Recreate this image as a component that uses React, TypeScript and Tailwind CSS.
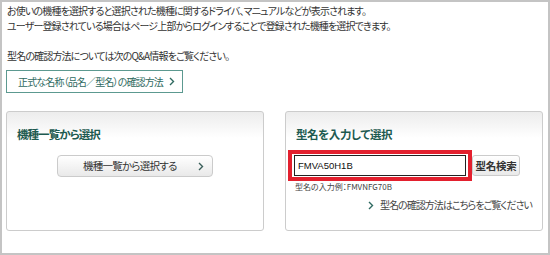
import React from 'react'

const jp = '[font-family:"Noto_Sans_CJK_JP",sans-serif] [font-feature-settings:"palt"]'

const Chevron = ({ className = '' }: { className?: string }) => (
  <svg width="6" height="9" viewBox="0 0 6 9" className={className}>
    <polyline points="1,1 4.5,4.5 1,8" fill="none" stroke="currentColor" strokeWidth="1.4" />
  </svg>
)

const panelBg = 'bg-[linear-gradient(to_bottom,#ececec,#ffffff_26px)]'
const btnBg = 'bg-[linear-gradient(to_bottom,#ffffff,#e9e9e9)]'

const App = () => {
  return (
    <div className={`w-[550px] h-[255px] border-2 border-[#c4c4c4] bg-white text-[#333] ${jp}`}>
      <div className="pl-[5px] pt-px text-[10px] leading-[15px] tracking-[-0.85px]">
        <p>お使いの機種を選択すると選択された機種に関するドライバ、マニュアルなどが表示されます。</p>
        <p>ユーザー登録されている場合はページ上部からログインすることで登録された機種を選択できます。</p>
        <p className="mt-[15px]">型名の確認方法については次のQ&amp;A情報をご覧ください。</p>
      </div>

      <button className="ml-[4px] mt-[7px] flex h-[23px] w-[177px] items-center justify-between whitespace-nowrap border border-[#5c9990] bg-white pl-[11px] pr-[7px] text-[10px] tracking-[-0.85px] text-[#2f6a61]">
        <span>正式な名称（品名／型名）の確認方法</span>
        <Chevron className="text-[#2f6a61]" />
      </button>

      <div className="ml-[4px] mt-[18px] flex gap-[21px]">
        <div className={`h-[120px] w-[258px] rounded-[3px] border border-[#cccccc] ${panelBg} px-[10px] pt-[15px]`}>
          <h2 className="whitespace-nowrap text-[11.5px] font-bold leading-[14px] tracking-[-0.95px] text-[#1d5a50]">機種一覧から選択</h2>
          <div className="mt-[14px] flex justify-center">
            <button className={`flex h-[22px] w-[156px] items-center justify-between whitespace-nowrap rounded-[4px] border border-[#cbcbcb] ${btnBg} pl-[25px] pr-[8px] text-[10.5px] tracking-[-0.75px] text-[#333]`}>
              <span>機種一覧から選択する</span>
              <Chevron className="text-[#3b5f5a]" />
            </button>
          </div>
        </div>

        <div className={`h-[120px] w-[258px] rounded-[3px] border border-[#cccccc] ${panelBg} pl-[2px] pr-[10px] pt-[15px]`}>
          <h2 className="whitespace-nowrap pl-[8px] text-[11.5px] font-bold leading-[14px] tracking-[-0.4px] text-[#1d5a50]">型名を入力して選択</h2>
          <div className="mt-[9px] flex items-center">
            <div className="border-4 border-[#e3202e] bg-white px-[2px] py-px">
              <input
                readOnly
                value="FMVA50H1B"
                className="block h-[21px] w-[172px] border border-[#222] bg-white px-[3px] text-[9.5px] tracking-normal text-[#111] outline-none [font-family:'Liberation_Sans',sans-serif]"
              />
            </div>
            <button className={`flex h-[21px] w-[48px] items-center justify-center whitespace-nowrap rounded-[3px] border border-[#cbcbcb] ${btnBg} text-[10.5px] font-bold tracking-[-0.3px] text-[#333]`}>
              型名検索
            </button>
          </div>
          <p className="mt-[1px] pl-[7px] text-[8px] leading-[10px] text-[#444]">型名の入力例：FMVNFG70B</p>
          <div className="mt-[6px] flex items-center justify-end gap-[6px] whitespace-nowrap text-[10px] leading-[14px] tracking-[-0.95px] text-[#444]">
            <Chevron className="text-[#2f6a61]" />
            <span>型名の確認方法はこちらをご覧ください</span>
          </div>
        </div>
      </div>
    </div>
  )
}

export default App
